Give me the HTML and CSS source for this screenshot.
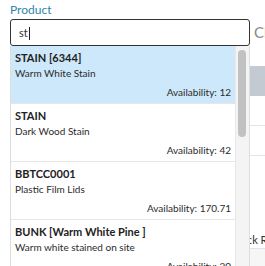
FILE: index.html
```html
<!DOCTYPE html>
<html lang="en">
<head>
    <meta charset="UTF-8">
    <meta name="viewport" content="width=device-width, initial-scale=1.0">
    <title>Product search</title>
    <link rel="stylesheet" href="styles.css">
</head>
<body>
    <div class="page">
        <div class="field-row">
            <div class="field">
                <label class="field-label">Product</label>
                <div class="search-input">st<span class="caret"></span></div>

                <!-- suggestions list, lies over the table below -->
                <div class="dropdown">
                    <div class="options">
                        <div class="option active">
                            <div class="option-code">STAIN [6344]</div>
                            <div class="option-name">Warm White Stain</div>
                            <div class="option-stock">Availability: 12</div>
                        </div>
                        <div class="option">
                            <div class="option-code">STAIN</div>
                            <div class="option-name">Dark Wood Stain</div>
                            <div class="option-stock">Availability: 42</div>
                        </div>
                        <div class="option">
                            <div class="option-code">BBTCC0001</div>
                            <div class="option-name">Plastic Film Lids</div>
                            <div class="option-stock">Availability: 170.71</div>
                        </div>
                        <div class="option">
                            <div class="option-code">BUNK [Warm White Pine ]</div>
                            <div class="option-name">Warm white stained on site</div>
                            <div class="option-stock">Availability: 20</div>
                        </div>
                    </div>
                    <div class="scroll-track">
                        <div class="scroll-thumb"></div>
                    </div>
                </div>
            </div>
            <button class="clear-btn">Clear</button>
        </div>

        <div class="grid">
            <div class="grid-head"></div>
            <div class="grid-row"></div>
            <div class="grid-row"></div>
            <div class="grid-gap"></div>
            <div class="grid-row grid-label">Stock Rate</div>
            <div class="grid-foot"></div>
        </div>
    </div>
</body>
</html>
```

FILE: styles.css
```css
body {
    margin: 0;
    font-family: Lato, "Open Sans", sans-serif;
    color: #333;
    background-color: #fff;
    overflow: hidden;
}
.page {
    padding: 3px 0 0 10px;
    width: 255px;
    height: 263px;
    overflow: hidden;
}
.field-row {
    display: flex;
    align-items: flex-end;
}
.field {
    position: relative;
    width: 240px;
    flex-shrink: 0;
}
.field-label {
    display: block;
    font-size: 12px;
    line-height: 14px;
    color: #2f84ad;
    margin-bottom: 2px;
}
.search-input {
    height: 25px;
    border: 1px solid #333;
    border-radius: 3px;
    padding-left: 8px;
    font-size: 11px;
    line-height: 25px;
    color: #333;
}
.caret {
    display: inline-block;
    width: 1px;
    height: 13px;
    background-color: #222;
    vertical-align: -3px;
    margin-left: 1px;
}
.clear-btn {
    height: 27px;
    border: none;
    background: none;
    padding: 0;
    margin: 0 0 0 4px;
    font-family: Lato, sans-serif;
    font-size: 15px;
    line-height: 27px;
    color: #8a8a8a;
    white-space: nowrap;
}

/* dropdown */
.dropdown {
    position: absolute;
    top: 43px;
    left: 0;
    width: 240px;
    height: 240px;
    display: flex;
    background-color: #fff;
    border-left: 1px solid #ddd;
    border-right: 1px solid #ddd;
    box-sizing: border-box;
    z-index: 2;
}
.options {
    flex: 1;
}
.option {
    height: 58px;
    box-sizing: border-box;
    padding: 4px 4px 0 4px;
    border-bottom: 1px solid #e6e6e6;
    font-size: 10px;
    color: #2b2b2b;
}
.option.active {
    background-color: #cde8fa;
}
.option-code {
    font-size: 11px;
    font-weight: bold;
    line-height: 15px;
    color: #222;
    white-space: nowrap;
}
.option-name {
    line-height: 16px;
    white-space: nowrap;
}
.option-stock {
    margin-top: 3px;
    line-height: 16px;
    text-align: right;
}
.scroll-track {
    width: 13px;
    background-color: #f4f4f4;
    border-left: 1px solid #e8e8e8;
    padding-top: 4px;
}
.scroll-thumb {
    width: 8px;
    height: 87px;
    margin-left: 2px;
    border-radius: 4px;
    background-color: #c1c1c1;
}

/* table behind the dropdown */
.grid {
    margin-top: 20px;
}
.grid-head {
    height: 30px;
    background-color: #c4cad1;
}
.grid-row {
    height: 29px;
    border-bottom: 1px solid #e4e4e4;
}
.grid-gap {
    height: 76px;
}
.grid-label {
    height: 16px;
    font-size: 11px;
    line-height: 16px;
    padding-left: 221px;
    white-space: nowrap;
}
.grid-foot {
    height: 30px;
    background-color: #f6f6f6;
}
```
